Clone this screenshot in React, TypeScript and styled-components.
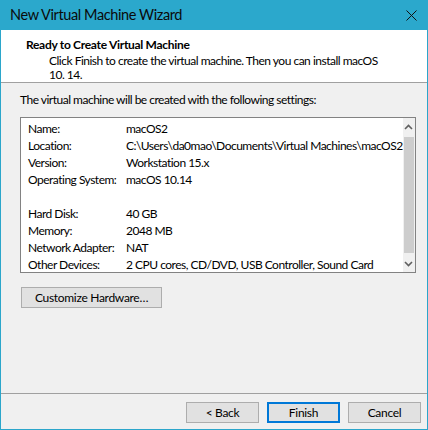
import React from "react";
import styled, { createGlobalStyle } from "styled-components";

const Global = createGlobalStyle`
  html, body { margin: 0; padding: 0; background: #f0f0f0; }
  body { font-family: Lato, "Liberation Sans", sans-serif; font-size: 12px; letter-spacing: -0.5px; color: #000; }
`;

const Window = styled.div`
  width: 428px;
  height: 430px;
  box-sizing: border-box;
  display: flex;
  flex-direction: column;
  background: #f0f0f0;
  border: 1px solid #2ba6cb;
  border-top: none;
`;

const TitleBar = styled.div`
  height: 30px;
  margin: 0 -1px;
  background: #2ba8cc;
  display: flex;
  align-items: center;
  justify-content: space-between;
  padding: 0 10px 0 10px;
`;

const Title = styled.span`
  font-size: 14.5px;
  letter-spacing: -0.4px;
  color: #0a0a0a;
  line-height: 30px;
`;

const CloseIcon = styled.svg`
  width: 11px;
  height: 11px;
  margin-right: 1px;
`;

const Header = styled.div`
  background: #fff;
  height: 52px;
  border-bottom: 1px solid #a0a0a0;
  box-sizing: content-box;
  padding-left: 25px;
`;

const HeaderTitle = styled.div`
  font-weight: bold;
  letter-spacing: -0.3px;
  line-height: 16px;
  padding-top: 7px;
`;

const HeaderText = styled.div`
  padding-left: 23px;
  margin-top: 1px;
  line-height: 14px;
`;

const Body = styled.div`
  flex: 1;
  display: flex;
  flex-direction: column;
  padding: 0 11px 0 19px;
`;

const Intro = styled.div`
  line-height: 16px;
  margin-top: 9px;
`;

const SettingsBox = styled.div`
  margin-top: 9px;
  height: 154px;
  border: 1px solid #828282;
  background: #fff;
  display: flex;
`;

const SettingsList = styled.div`
  flex: 1;
  padding: 2px 0 0 7px;
`;

const Row = styled.div`
  display: grid;
  grid-template-columns: 98px 1fr;
  height: 17px;
  line-height: 17px;
  white-space: nowrap;
`;

const Scrollbar = styled.div`
  width: 17px;
  background: #f0f0f0;
  display: flex;
  flex-direction: column;
`;

const Arrow = styled.div`
  height: 17px;
  display: flex;
  align-items: center;
  justify-content: center;
`;

const Thumb = styled.div`
  flex: 1;
  background: #cdcdcd;
  margin: 2px 1px;
`;

const Spacer = styled.div`
  flex: 1;
`;

const Button = styled.button<{ $primary?: boolean; $w?: number }>`
  font-family: inherit;
  font-size: 12px;
  letter-spacing: -0.3px;
  color: #000;
  height: 21px;
  width: ${(p) => p.$w ?? 73}px;
  padding: 0;
  background: #e1e1e1;
  border: ${(p) => (p.$primary ? "2px solid #0078d7" : "1px solid #adadad")};
  box-sizing: border-box;
  line-height: 1;
`;

const CustomizeRow = styled.div`
  margin-top: 14px;
  padding-left: 1px;
`;

const Footer = styled.div`
  border-top: 1px solid #a0a0a0;
  height: 36px;
  display: flex;
  justify-content: flex-end;
  align-items: flex-start;
  padding: 8px 6px 0 0;
  box-sizing: border-box;
  gap: 8px;
`;

const Chevron = ({ up }: { up?: boolean }) => (
  <svg width="9" height="6" viewBox="0 0 9 6">
    <path
      d={up ? "M1 5 L4.5 1.5 L8 5" : "M1 1 L4.5 4.5 L8 1"}
      fill="none"
      stroke="#606060"
      strokeWidth="1.6"
    />
  </svg>
);

const rows: [string, string][] = [
  ["Name:", "macOS2"],
  ["Location:", "C:\\Users\\da0mao\\Documents\\Virtual Machines\\macOS2"],
  ["Version:", "Workstation 15.x"],
  ["Operating System:", "macOS 10.14"],
  ["", ""],
  ["Hard Disk:", "40 GB"],
  ["Memory:", "2048 MB"],
  ["Network Adapter:", "NAT"],
  ["Other Devices:", "2 CPU cores, CD/DVD, USB Controller, Sound Card"],
];

export default function App() {
  return (
    <>
      <Global />
      <Window>
        <TitleBar>
          <Title>New Virtual Machine Wizard</Title>
          <CloseIcon viewBox="0 0 11 11">
            <path d="M0.5 0.5 L10.5 10.5 M10.5 0.5 L0.5 10.5" stroke="#111" strokeWidth="1" />
          </CloseIcon>
        </TitleBar>
        <Header>
          <HeaderTitle>Ready to Create Virtual Machine</HeaderTitle>
          <HeaderText>
            Click Finish to create the virtual machine. Then you can install macOS
            <br />
            10. 14.
          </HeaderText>
        </Header>
        <Body>
          <Intro>The virtual machine will be created with the following settings:</Intro>
          <SettingsBox>
            <SettingsList>
              {rows.map(([k, v], i) => (
                <Row key={i}>
                  <span>{k}</span>
                  <span>{v}</span>
                </Row>
              ))}
            </SettingsList>
            <Scrollbar>
              <Arrow>
                <Chevron up />
              </Arrow>
              <Thumb />
              <Arrow>
                <Chevron />
              </Arrow>
            </Scrollbar>
          </SettingsBox>
          <CustomizeRow>
            <Button $w={141}>Customize Hardware…</Button>
          </CustomizeRow>
          <Spacer />
        </Body>
        <Footer>
          <Button>&lt; Back</Button>
          <Button $primary>Finish</Button>
          <Button>Cancel</Button>
        </Footer>
      </Window>
    </>
  );
}
